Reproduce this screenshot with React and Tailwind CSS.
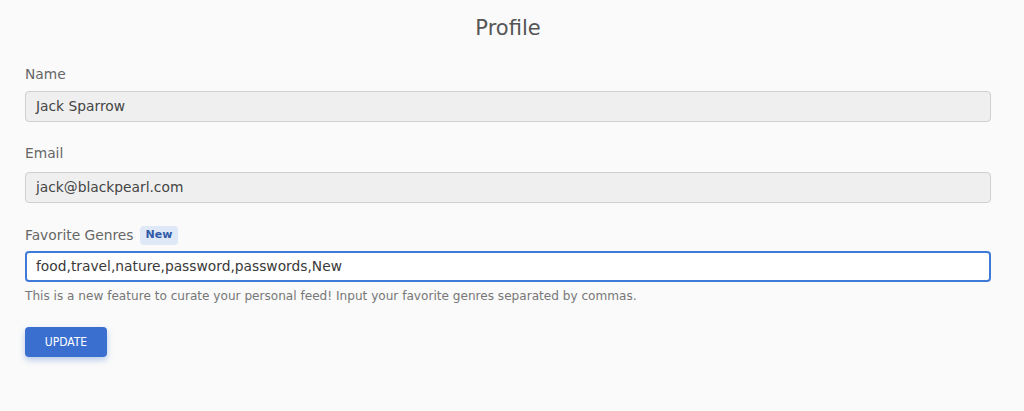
export default function App() {
  return (
    <div className="min-h-[411px] w-full bg-[#fafafa] font-['DejaVu_Sans',sans-serif]">
      <div className="pl-[25px] pr-[33px] pt-[14px]">
        <h1 className="text-center text-[21px] leading-[28px] text-[#555]">Profile</h1>

        <div className="mt-[22px] flex flex-col">
          <label className="text-[13.8px] leading-[20px] text-[#666]">Name</label>
          <div className="mt-[7px] h-[31px] rounded-[4px] border border-[#cfcfcf] bg-[#efefef] px-[10px] flex items-center text-[13.8px] text-[#444]">
            Jack Sparrow
          </div>
        </div>

        <div className="mt-[21px] flex flex-col">
          <label className="text-[13.8px] leading-[20px] text-[#666]">Email</label>
          <div className="mt-[9px] h-[31px] rounded-[4px] border border-[#cfcfcf] bg-[#efefef] px-[10px] flex items-center text-[13.8px] text-[#444]">
            jack@blackpearl.com
          </div>
        </div>

        <div className="mt-[22px] flex flex-col">
          <div className="flex items-center gap-[6px]">
            <label className="text-[13.8px] leading-[20px] text-[#666]">Favorite Genres</label>
            <span className="rounded-[4px] bg-[#dfe8f7] px-[6px] h-[19px] flex items-center text-[11px] font-bold text-[#2f5ba6]">New</span>
          </div>
          <div className="mt-[6px] h-[31px] rounded-[4px] border-2 border-[#3f7ad8] bg-white px-[9px] flex items-center text-[13.8px] text-[#3a3a3a]">
            food,travel,nature,password,passwords,New
          </div>
          <p className="mt-[6px] text-[12.1px] leading-[16px] text-[#777]">
            This is a new feature to curate your personal feed! Input your favorite genres separated by commas.
          </p>
        </div>

        <button className="mt-[23px] h-[30px] w-[82px] rounded-[4px] bg-[#3a6fcf] text-[12px] text-white font-['DejaVu_Sans_Condensed','DejaVu_Sans',sans-serif] shadow-[0_3px_6px_rgba(58,111,207,0.35)]">
          UPDATE
        </button>
      </div>
    </div>
  );
}
